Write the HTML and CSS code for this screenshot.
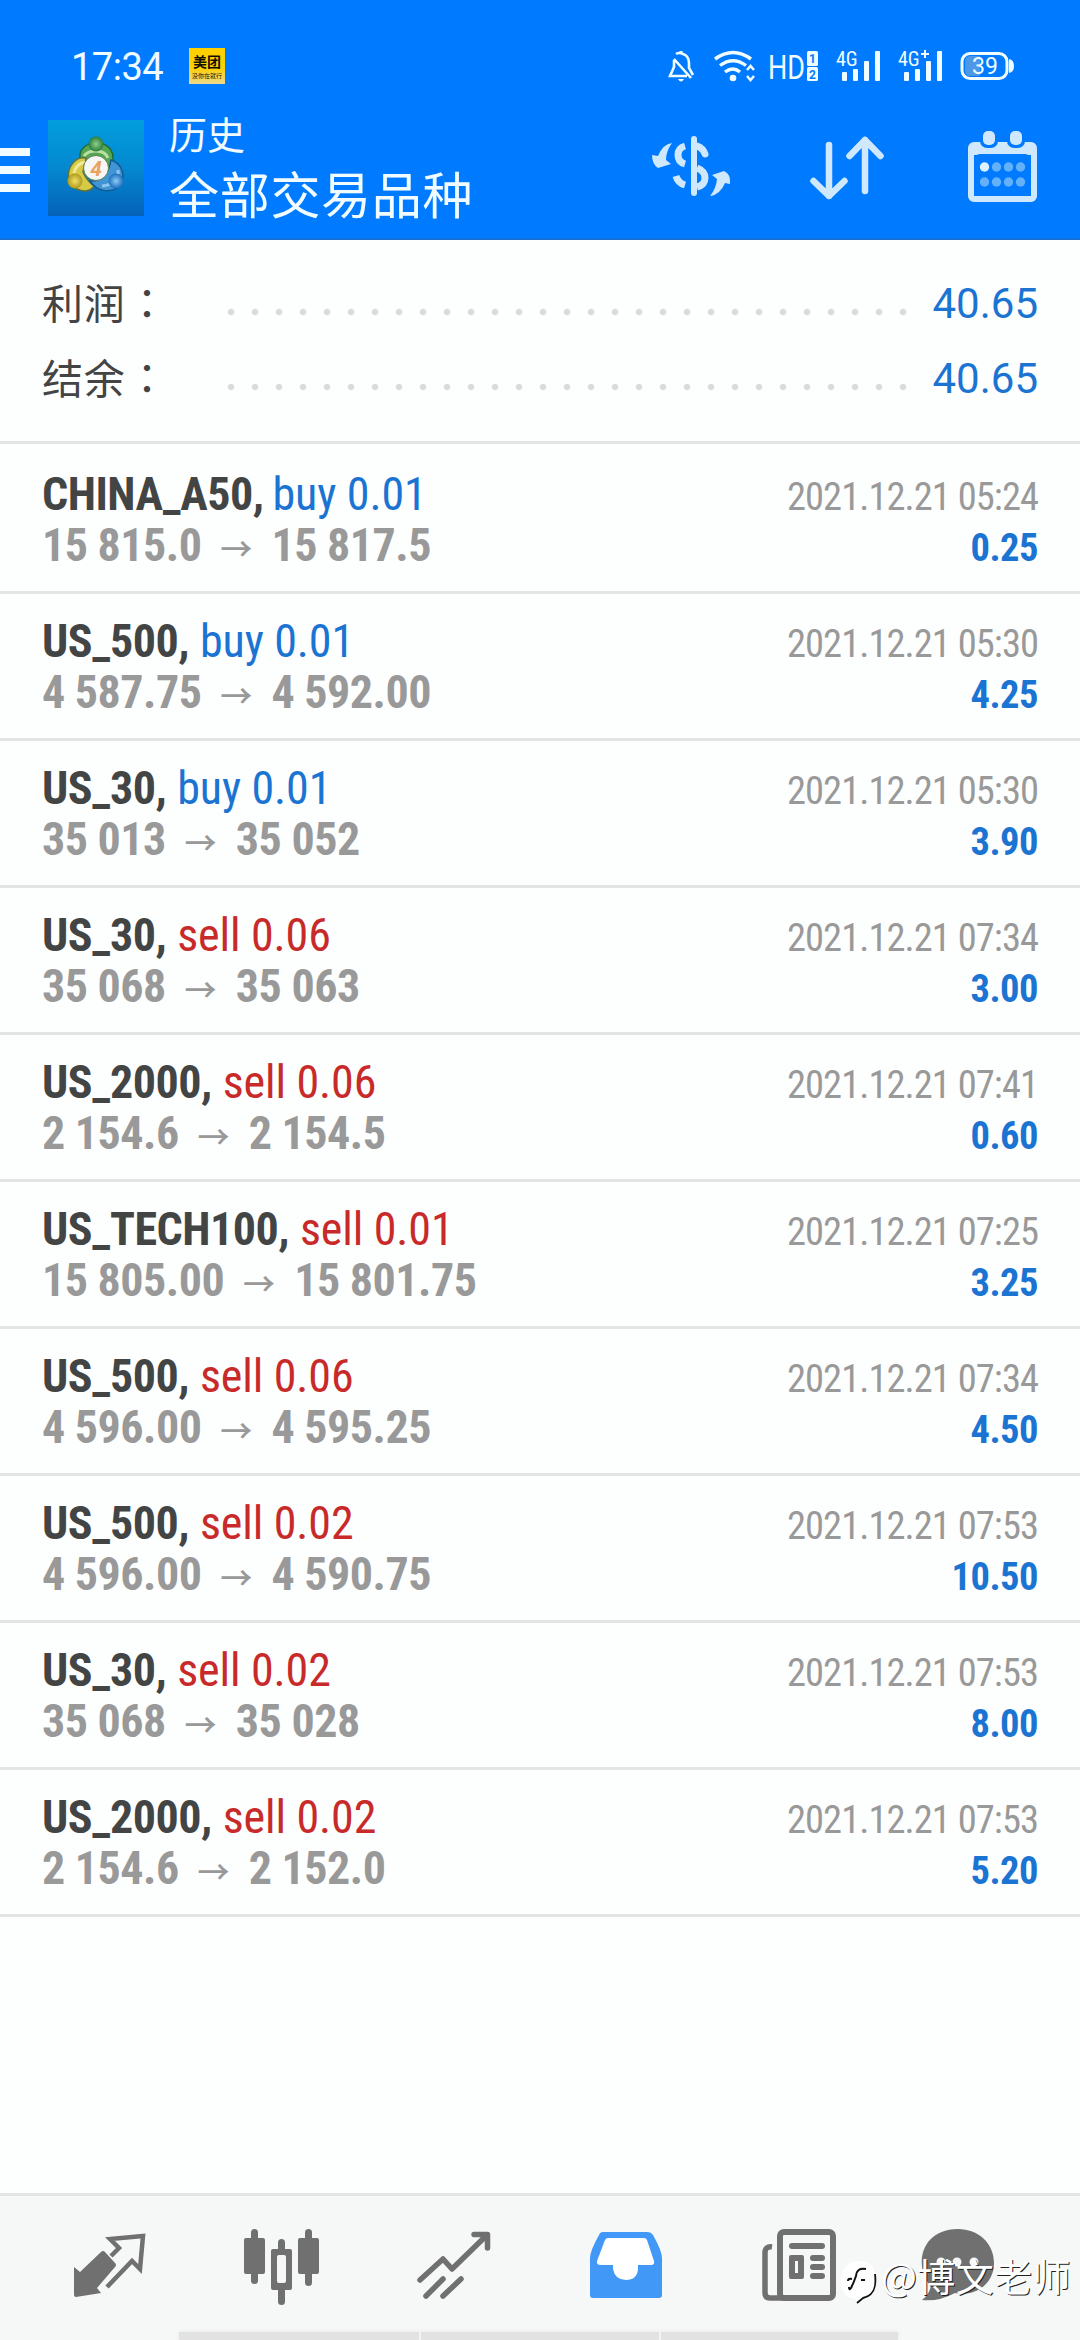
FILE: index.html
```
<!DOCTYPE html>
<html lang="zh-CN">
<head>
<meta charset="utf-8">
<title>历史</title>
<link rel="stylesheet" href="styles.css">
</head>
<body>
<div class="screen">
  <header class="header">
    <div class="status">
      <span class="clock">17:34</span>
      <span class="meituan"><b>美团</b><i>没你在就行</i></span>
      <svg class="status-icons" width="352" height="40" viewBox="0 0 352 40">
        <g fill="none" stroke="#f0fcff" stroke-width="2.6">
          <path d="M13 9 Q16 7 20 9 Q26 11 26 18 V23 L30 30 M11 15 V22 L7 31 H24 M11 14 L28 33"/>
          <path d="M18 6 V9" stroke-width="3"/>
        </g>
        <path d="M15 34 h6 q-3 5 -6 0z" fill="#f0fcff"/>
        <g fill="none" stroke="#f0fcff" stroke-width="3.4">
          <path d="M52 14 Q70 1 88 14"/><path d="M57 20.500 Q70 11 83 20.500"/><path d="M62 27 Q70 21 77 27"/>
        </g>
        <circle cx="70" cy="33" r="3.300" fill="#f0fcff"/>
        <path d="M84 25 l3.500-4 3.500 4M84 31 l3.500 4 3.500-4" fill="none" stroke="#f0fcff" stroke-width="2.500"/>
        <text x="105" y="33.500" class="hd" textLength="37" lengthAdjust="spacingAndGlyphs">HD</text>
        <rect x="144" y="6" width="11" height="15" rx="1.500" fill="#f0fcff"/>
        <rect x="144" y="22" width="11" height="14" rx="1.500" fill="#f0fcff"/>
        <text x="149.500" y="18" class="sim">1</text><text x="149.500" y="33.500" class="sim">2</text>
        <text x="173" y="21" class="net">4G</text>
        <g fill="#f0fcff">
          <rect x="179" y="27" width="5" height="9" rx="1"/><rect x="190" y="24" width="5" height="12" rx="1"/><rect x="201" y="16" width="5" height="20" rx="1"/><rect x="212" y="6" width="5" height="30" rx="1"/>
          <rect x="241" y="27" width="5" height="9" rx="1"/><rect x="252" y="24" width="5" height="12" rx="1"/><rect x="263" y="16" width="5" height="20" rx="1"/><rect x="274" y="6" width="5" height="30" rx="1"/>
        </g>
        <text x="235" y="21" class="net">4G</text>
        <path d="M258 9h8M262 5v8" stroke="#f0fcff" stroke-width="2"/>
        <rect x="299" y="8.500" width="45" height="25" rx="8" fill="none" stroke="#f0fcff" stroke-width="3"/>
        <path d="M307 11 h10 v20 h-10 q-5 0 -5 -6 v-8 q0 -6 5 -6z" fill="#4d98e6"/>
        <path d="M346 14 q5 1 5 7 q0 6-5 7z" fill="#f0fcff"/>
        <text x="322" y="28.500" class="bat">39</text>
      </svg>
    </div>
    <div class="appbar">
      <div class="menu"><span></span><span></span><span></span></div>
      <svg class="logo" width="96" height="96" viewBox="0 0 96 96">
        <defs>
          <linearGradient id="bg" x1="0" y1="0" x2="0" y2="1"><stop offset="0" stop-color="#029ede"/><stop offset=".5" stop-color="#0488d0"/><stop offset="1" stop-color="#0462b8"/></linearGradient>
          <radialGradient id="g"><stop offset="0" stop-color="#8fcf8c"/><stop offset="1" stop-color="#2a7d3c"/></radialGradient>
          <radialGradient id="y"><stop offset="0" stop-color="#f2e068"/><stop offset="1" stop-color="#b09a1e"/></radialGradient>
          <radialGradient id="b"><stop offset="0" stop-color="#8ccbf5"/><stop offset="1" stop-color="#1c70bd"/></radialGradient>
        </defs>
        <rect width="96" height="96" fill="url(#bg)"/>
        <path d="M32 38 C30 19 64 17 65 37 Q66 49 60 52 L37 42 Z" fill="#55a653" stroke="#216b3a" stroke-width="1.500"/>
        <path d="M38 38 C28 36 18 47 21 60 C25 72 41 74 46 66 Q39 61 35 52 Z" fill="#d7ca45" stroke="#5d7440" stroke-width="1.500"/>
        <path d="M63 40 C75 44 79 58 70 67 C62 73 49 72 42 61 Q59 62 63 40 Z" fill="#4295d4" stroke="#145a93" stroke-width="1.500"/>
        <path d="M36 36 C40 30 56 28 60 38" stroke="#bddea5" stroke-width="3" fill="none"/>
        <path d="M26 53 Q28 44 37 42" stroke="#f2e999" stroke-width="3" fill="none"/>
        <path d="M54 66 Q72 64 70 50" stroke="#8fc6ed" stroke-width="3" fill="none"/>
        <circle cx="48" cy="24" r="7.500" fill="url(#g)"/><circle cx="27" cy="61" r="7.500" fill="url(#y)"/><circle cx="68" cy="61" r="7.500" fill="url(#b)"/>
        <circle cx="48" cy="48" r="12.500" fill="#f6f7f5" stroke="#56814f"/>
        <text x="48" y="55.500" class="four">4</text>
      </svg>
      <div class="titles"><div class="title-small">历史</div><div class="title-big">全部交易品种</div></div>
      <div class="actions">
        <svg width="80" height="64" viewBox="0 0 80 64" fill="#cfe8fb">
          <path d="M21 8 Q12 9 7 21 L1 20 Q1 29 7 33 L20 29 L15 25 Q15 16 21 8Z"/>
          <path d="M59 61 Q69 60 74 48 L79 49 Q80 39 73 36 L61 40 L66 44 Q65 54 59 61Z"/>
          <rect x="40" y="1" width="6" height="60" rx="3"/>
          <g fill="none" stroke="#cfe8fb" stroke-width="7" ><path d="M34 11 Q27 13 27 20 Q27 27 34 29"/><path d="M34 50 Q27 48 25 41" /><path d="M46 11 Q52 13 54 19" stroke-linecap="round"/><path d="M46 33 Q54 36 54 43 Q54 50 46 52"/></g>
        </svg>
        <svg width="76" height="66" viewBox="0 0 76 66" fill="none" stroke="#cfe8fb" stroke-width="6.500" stroke-linecap="round" stroke-linejoin="round">
          <path d="M20 10 V61 M4.500 46 L20 61 L35.500 46 M56 56 V5 M40.500 21 L56 5 L71.500 21"/>
        </svg>
        <svg width="70" height="74" viewBox="0 0 70 74">
          <rect x="3" y="16" width="63" height="54" rx="3" fill="none" stroke="#cfe8fb" stroke-width="6"/>
          <rect x="3" y="14" width="63" height="12" fill="#cfe8fb"/>
          <rect x="6" y="25" width="57" height="42" rx="6" fill="#007bff"/>
          <rect x="12" y="0" width="18" height="19" rx="7" fill="#007bff"/><rect x="39" y="0" width="18" height="19" rx="7" fill="#007bff"/>
          <rect x="15" y="2" width="12" height="14" rx="5" fill="#cfe8fb"/><rect x="42" y="2" width="12" height="14" rx="5" fill="#cfe8fb"/>
          <g fill="#63b1fb"><circle cx="28.500" cy="38" r="4.700"/><circle cx="40.500" cy="38" r="4.700"/><circle cx="52.500" cy="38" r="4.700"/><circle cx="16.500" cy="53" r="4.700"/><circle cx="28.500" cy="53" r="4.700"/><circle cx="40.500" cy="53" r="4.700"/><circle cx="52.500" cy="53" r="4.700"/></g>
          <circle cx="16.500" cy="38" r="4.700" fill="#dcf3ff"/>
        </svg>
      </div>
    </div>
  </header>

  <section class="summary">
    <div class="sum-row"><span class="sum-label">利润<span class="colon" lang="zh-TW">：</span></span><span class="dots"></span><span class="sum-value">40.65</span></div>
    <div class="sum-row"><span class="sum-label">结余<span class="colon" lang="zh-TW">：</span></span><span class="dots"></span><span class="sum-value">40.65</span></div>
  </section>

  <main class="deals">
    <article class="deal"><div class="line"><b class="symbol">CHINA_A50,</b> <span class="buy">buy 0.01</span><time>2021.12.21 05:24</time></div><div class="line price">15 815.0<span class="arrow">→</span>15 817.5<span class="profit">0.25</span></div></article>
    <article class="deal"><div class="line"><b class="symbol">US_500,</b> <span class="buy">buy 0.01</span><time>2021.12.21 05:30</time></div><div class="line price">4 587.75<span class="arrow">→</span>4 592.00<span class="profit">4.25</span></div></article>
    <article class="deal"><div class="line"><b class="symbol">US_30,</b> <span class="buy">buy 0.01</span><time>2021.12.21 05:30</time></div><div class="line price">35 013<span class="arrow">→</span>35 052<span class="profit">3.90</span></div></article>
    <article class="deal"><div class="line"><b class="symbol">US_30,</b> <span class="sell">sell 0.06</span><time>2021.12.21 07:34</time></div><div class="line price">35 068<span class="arrow">→</span>35 063<span class="profit">3.00</span></div></article>
    <article class="deal"><div class="line"><b class="symbol">US_2000,</b> <span class="sell">sell 0.06</span><time>2021.12.21 07:41</time></div><div class="line price">2 154.6<span class="arrow">→</span>2 154.5<span class="profit">0.60</span></div></article>
    <article class="deal"><div class="line"><b class="symbol">US_TECH100,</b> <span class="sell">sell 0.01</span><time>2021.12.21 07:25</time></div><div class="line price">15 805.00<span class="arrow">→</span>15 801.75<span class="profit">3.25</span></div></article>
    <article class="deal"><div class="line"><b class="symbol">US_500,</b> <span class="sell">sell 0.06</span><time>2021.12.21 07:34</time></div><div class="line price">4 596.00<span class="arrow">→</span>4 595.25<span class="profit">4.50</span></div></article>
    <article class="deal"><div class="line"><b class="symbol">US_500,</b> <span class="sell">sell 0.02</span><time>2021.12.21 07:53</time></div><div class="line price">4 596.00<span class="arrow">→</span>4 590.75<span class="profit">10.50</span></div></article>
    <article class="deal"><div class="line"><b class="symbol">US_30,</b> <span class="sell">sell 0.02</span><time>2021.12.21 07:53</time></div><div class="line price">35 068<span class="arrow">→</span>35 028<span class="profit">8.00</span></div></article>
    <article class="deal"><div class="line"><b class="symbol">US_2000,</b> <span class="sell">sell 0.02</span><time>2021.12.21 07:53</time></div><div class="line price">2 154.6<span class="arrow">→</span>2 152.0<span class="profit">5.20</span></div></article>
  </main>

  <nav class="tabs">
    <svg width="76" height="76" viewBox="0 0 76 76">
      <path d="M2 23 L8 28 L29 8 Q31 6 33 8 L43 19 Q45 21 43 23 L25 44 L29 49 L4 53 Q2 53 2 51Z" fill="#707070" transform="translate(0 17)"/>
      <path d="M39 27 L47 19 L38 10 L71 7 L68 40 L60 32 L35 58" transform="translate(0 2)" fill="none" stroke="#707070" stroke-width="4.500"/>
    </svg>
    <svg width="76" height="76" viewBox="0 0 76 76" fill="#707070">
      <rect x="0" y="11" width="21" height="36" rx="2"/><rect x="7" y="2" width="7" height="55" rx="3.500"/>
      <rect x="54" y="11" width="21" height="36" rx="2"/><rect x="61" y="2" width="7" height="57" rx="3.500"/>
      <rect x="34" y="12" width="7" height="66" rx="3.500"/><rect x="27" y="22" width="21" height="41" rx="2"/><rect x="33" y="28" width="9" height="28" rx="2" fill="#f6f6f6"/>
    </svg>
    <svg width="76" height="76" viewBox="0 0 76 76" fill="none" stroke="#707070" stroke-width="5.500" stroke-linecap="round" stroke-linejoin="round">
      <path d="M4 53 L27 32 L36 42 L71 8 M58 7.500 H71.500 V21 M10 69 L27 52 M27 69 L45 52"/>
    </svg>
    <svg width="76" height="76" viewBox="0 0 76 76">
      <path d="M15 5 H59 Q63 5 65 8 Q74 24 74 31 V68 Q74 71 71 71 H5 Q2 71 2 68 V31 Q2 24 11 8 Q12 5 15 5Z" fill="#4198f7"/>
      <path d="M20 11 H56 Q58 11 59 13 L66 34 Q67 38 63 38 H50 V42 Q49 53 38 53 Q27 53 25 42 V38 H13 Q8 38 9 34 L17 13 Q18 11 20 11Z" fill="#fff"/>
    </svg>
    <svg class="news" width="76" height="76" viewBox="0 0 76 76">
      <g fill="none" stroke="#707070"><rect x="19" y="5" width="53" height="66" rx="4" stroke-width="6"/><path d="M11 20 Q4 19 4 26 V66 Q4 71 9 71 H22" stroke-width="5.500"/></g>
      <g fill="#707070"><rect x="28" y="16" width="36" height="6" rx="3"/><path fill-rule="evenodd" d="M30 28h11q2 0 2 2v20q0 2-2 2h-11q-2 0-2-2v-20q0-2 2-2zm4 6v12h3v-12z"/><rect x="49" y="28" width="15" height="6" rx="3"/><rect x="49" y="37" width="15" height="6" rx="3"/><rect x="49" y="46" width="15" height="6" rx="3"/></g>
    </svg>
    <svg class="chat" width="76" height="76" viewBox="0 0 76 76">
      <path d="M38 2 C58 2 74 16 74 36 C74 58 54 70 35 66 Q18 75 2 73 Q9 68 11 59 C-6 42 -1 2 38 2Z" fill="#707070"/>
      <circle cx="21" cy="35" r="4.500" fill="#f6f6f6"/><circle cx="37" cy="35" r="4.500" fill="#f6f6f6"/><circle cx="54" cy="35" r="4.500" fill="#f6f6f6"/>
    </svg>
    <div class="homebar"></div>
    <div class="watermark">
      <svg width="40" height="46" viewBox="0 0 40 46">
        <path d="M20 1 C31 1 36 8 35 20 C36 32 30 38 22 39 L17 44 L16 39 C6 38 1 31 1 21 C1 8 8 1 20 1Z" fill="#fff"/>
        <path d="M26 9 Q17 7 16 16 Q14 22 11 28 Q9 31 9 27 M8 21 Q8 18 12 19 M21 20 h4" fill="none" stroke="#111" stroke-width="2"/>
        <path d="M35 14 C37 30 32 36 23 38 L17 43" fill="none" stroke="#111" stroke-width="1.800"/>
      </svg><span>@博文老师</span>
    </div>
  </nav>
</div>
</body>
</html>
```
FILE: styles.css
```
* { box-sizing: border-box; }
body { margin: 0; background: #fdfefe; font-family: Roboto, "Noto Sans CJK SC", sans-serif; }
.screen { width: 1080px; height: 2340px; display: flex; flex-direction: column; overflow: hidden; position: relative; }
svg { display: block; flex: none; overflow: visible; }

.header { height: 240px; background: #007bff; border-bottom: 2px solid #1670d6; color: #f0fcff; flex: none; }
.status { height: 104px; padding: 45px 65px 0 71px; display: flex; align-items: flex-start; }
.clock { width: 118px; font-size: 38px; line-height: 44px; letter-spacing: -0.5px; }
.meituan { width: 36px; height: 36px; margin-top: 3px; background: linear-gradient(#ffd000 55%, #ecd98c); color: #141000; display: flex; flex-direction: column; align-items: center; padding-top: 5px; }
.meituan b { font-size: 14px; line-height: 19px; }
.meituan i { font: 6px/8px "Noto Sans CJK SC", sans-serif; }
.status-icons { margin-left: auto; }
.status-icons text { fill: #f0fcff; font-family: Roboto, sans-serif; }
.status-icons .hd { font-size: 34px; }
.status-icons .sim { font-size: 12px; font-weight: 700; fill: #007bff; text-anchor: middle; }
.status-icons .net { font: 20px "Roboto Condensed", Roboto, sans-serif; }
.status-icons .bat { font-size: 23px; text-anchor: middle; }

.appbar { height: 134px; display: flex; align-items: flex-start; padding-right: 42px; }
.menu { width: 30px; padding-top: 44px; display: flex; flex-direction: column; gap: 10px; flex: none; }
.menu span { height: 8px; background: #f0fcff; }
.logo { margin: 16px 0 0 18px; }
.four { font: italic 700 21px Roboto, sans-serif; fill: #eba25e; text-anchor: middle; }
.titles { margin-left: 25px; padding-top: 10px; }
.title-small { font-size: 38px; line-height: 44px; }
.title-big { font-size: 50px; line-height: 79px; letter-spacing: 0.7px; }
.actions { margin-left: auto; display: flex; align-items: flex-start; padding-top: 25px; }
.actions svg:nth-child(1) { margin: 6px 78px 0 0; }
.actions svg:nth-child(2) { margin: 6px 83px 0 0; }

.summary { height: 204px; padding: 26px 42px 0 42px; border-bottom: 3px solid #e3e4e4; flex: none; }
.sum-row { height: 75px; display: flex; align-items: center; font-size: 42px; }
.sum-label { width: 185px; color: #444; font-family: "Noto Sans CJK SC", sans-serif; flex: none; font-size: 41px; line-height: 60px; letter-spacing: 0.8px; padding-bottom: 6px; }
.colon { font-family: "Noto Sans CJK TC", sans-serif; margin-left: 1px; }
.dots { width: 696px; height: 8px; margin-top: 17px; flex: none; background: radial-gradient(circle at 4px 4px, #dadada 2.7px, transparent 3.7px) 0 0 / 24px 8px repeat-x; }
.sum-value { margin-left: auto; color: #1b74d2; line-height: 50px; }

.deals { flex: 1; padding-top: 3px; }
.deal { height: 147px; padding: 22px 42px 0; border-bottom: 3px solid #e3e4e4; font-family: "Roboto Condensed", Roboto, sans-serif; font-size: 46px; }
.line { height: 51px; line-height: 51px; display: flex; align-items: baseline; letter-spacing: -0.5px; white-space: pre; }
.symbol { color: #434545; }
.buy, .sell { margin-left: 11px; letter-spacing: -0.1px; }
.deal:first-child .buy { margin-left: 9px; }
.buy { color: #1b74d2; }
.sell { color: #c82a2a; }
.price { color: #999; font-weight: 700; }
.arrow { width: 70px; padding-right: 1px; text-align: center; font: 500 32px/40px "Noto Sans CJK SC", sans-serif; }
time { margin-left: auto; color: #999; font-size: 38.5px; letter-spacing: -0.95px; }
.profit { margin-left: auto; color: #1b74d2; font-size: 38.5px; letter-spacing: -0.5px; }

.tabs { height: 147px; flex: none; background: #f6f7f7; border-top: 3px solid #e3e4e4; display: flex; gap: 96px; padding: 31px 0 0 72px; position: relative; }
.news { margin-left: 1px; }
.chat { margin-left: -13px; }
.homebar { position: absolute; left: 179px; bottom: 0; width: 719px; height: 8px; background: linear-gradient(90deg, transparent 240px, #f4f4f4 240px 242px, transparent 242px 480px, #f4f4f4 480px 482px, transparent 482px), #e2e2e2; box-shadow: 0 0 4px #e6e6e6; }
.watermark { position: absolute; left: 840px; top: 64px; display: flex; align-items: flex-start; color: #fff; font: 38px/44px "Noto Sans CJK SC", sans-serif; text-shadow: 1px 1px 0 #222; }
.watermark span { margin: -7px 0 0 1px; white-space: nowrap; letter-spacing: 0.4px; }
```
